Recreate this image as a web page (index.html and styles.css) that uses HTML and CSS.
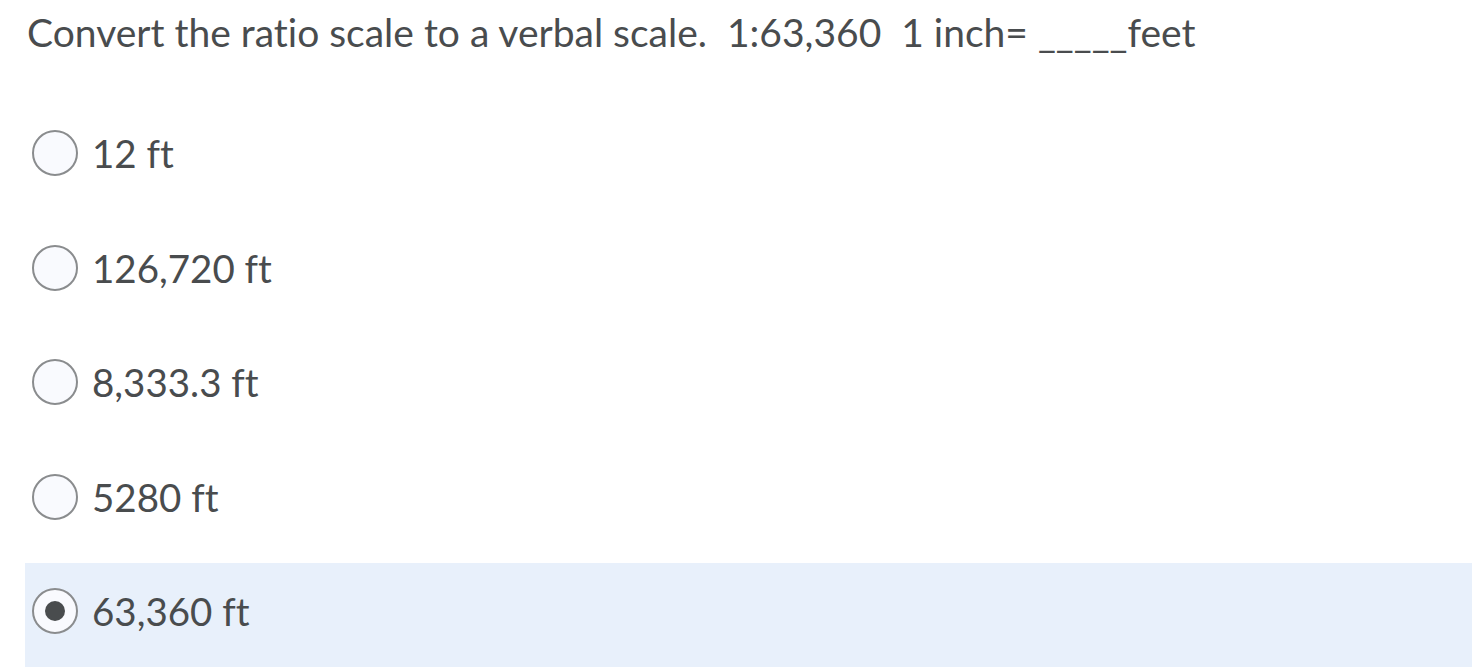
FILE: index.html
```html
<!DOCTYPE html>
<html>
<head>
<meta charset="utf-8">
<link rel="stylesheet" href="styles.css">
</head>
<body>
<div class="question">
  <p class="prompt">Convert the ratio scale to a verbal scale.&nbsp; 1:63,360&nbsp; 1 inch= _____feet</p>
  <div class="options">
    <label class="option"><span class="radio"></span><span class="text">12 ft</span></label>
    <label class="option"><span class="radio"></span><span class="text">126,720 ft</span></label>
    <label class="option"><span class="radio"></span><span class="text">8,333.3 ft</span></label>
    <label class="option"><span class="radio"></span><span class="text">5280 ft</span></label>
    <label class="option selected"><span class="radio checked"></span><span class="text">63,360 ft</span></label>
  </div>
</div>
</body>
</html>
```
FILE: styles.css
```css
html, body {
  margin: 0;
  padding: 0;
  background: #ffffff;
}
body {
  font-family: Lato, "Liberation Sans", sans-serif;
  color: #494c4e;
  font-variant-ligatures: none;
  font-feature-settings: "liga" 0, "clig" 0;
}
.question {
  padding: 0 10px 0 25px;
}
.prompt {
  margin: 0;
  padding: 7px 0 0 2px;
  font-size: 39px;
  line-height: 50px;
  white-space: nowrap;
}
.options {
  display: flex;
  flex-direction: column;
  margin-top: 48px;
}
.option {
  display: flex;
  align-items: flex-start;
  gap: 14px;
  height: 96px;
  box-sizing: border-box;
  padding: 25px 0 0 7px;
  font-size: 38.5px;
  line-height: 46px;
}
.option + .option {
  margin-top: 18.5px;
}
.option.selected {
  background: #e8f0fb;
  height: 110px;
}
.radio {
  box-sizing: border-box;
  width: 46px;
  height: 46px;
  border-radius: 50%;
  border: 2px solid #8a8c8e;
  background: #f9fafe;
  display: flex;
  align-items: center;
  justify-content: center;
  flex: none;
}
.radio.checked::after {
  content: "";
  width: 20px;
  height: 20px;
  border-radius: 50%;
  background: #494c4e;
}
```
